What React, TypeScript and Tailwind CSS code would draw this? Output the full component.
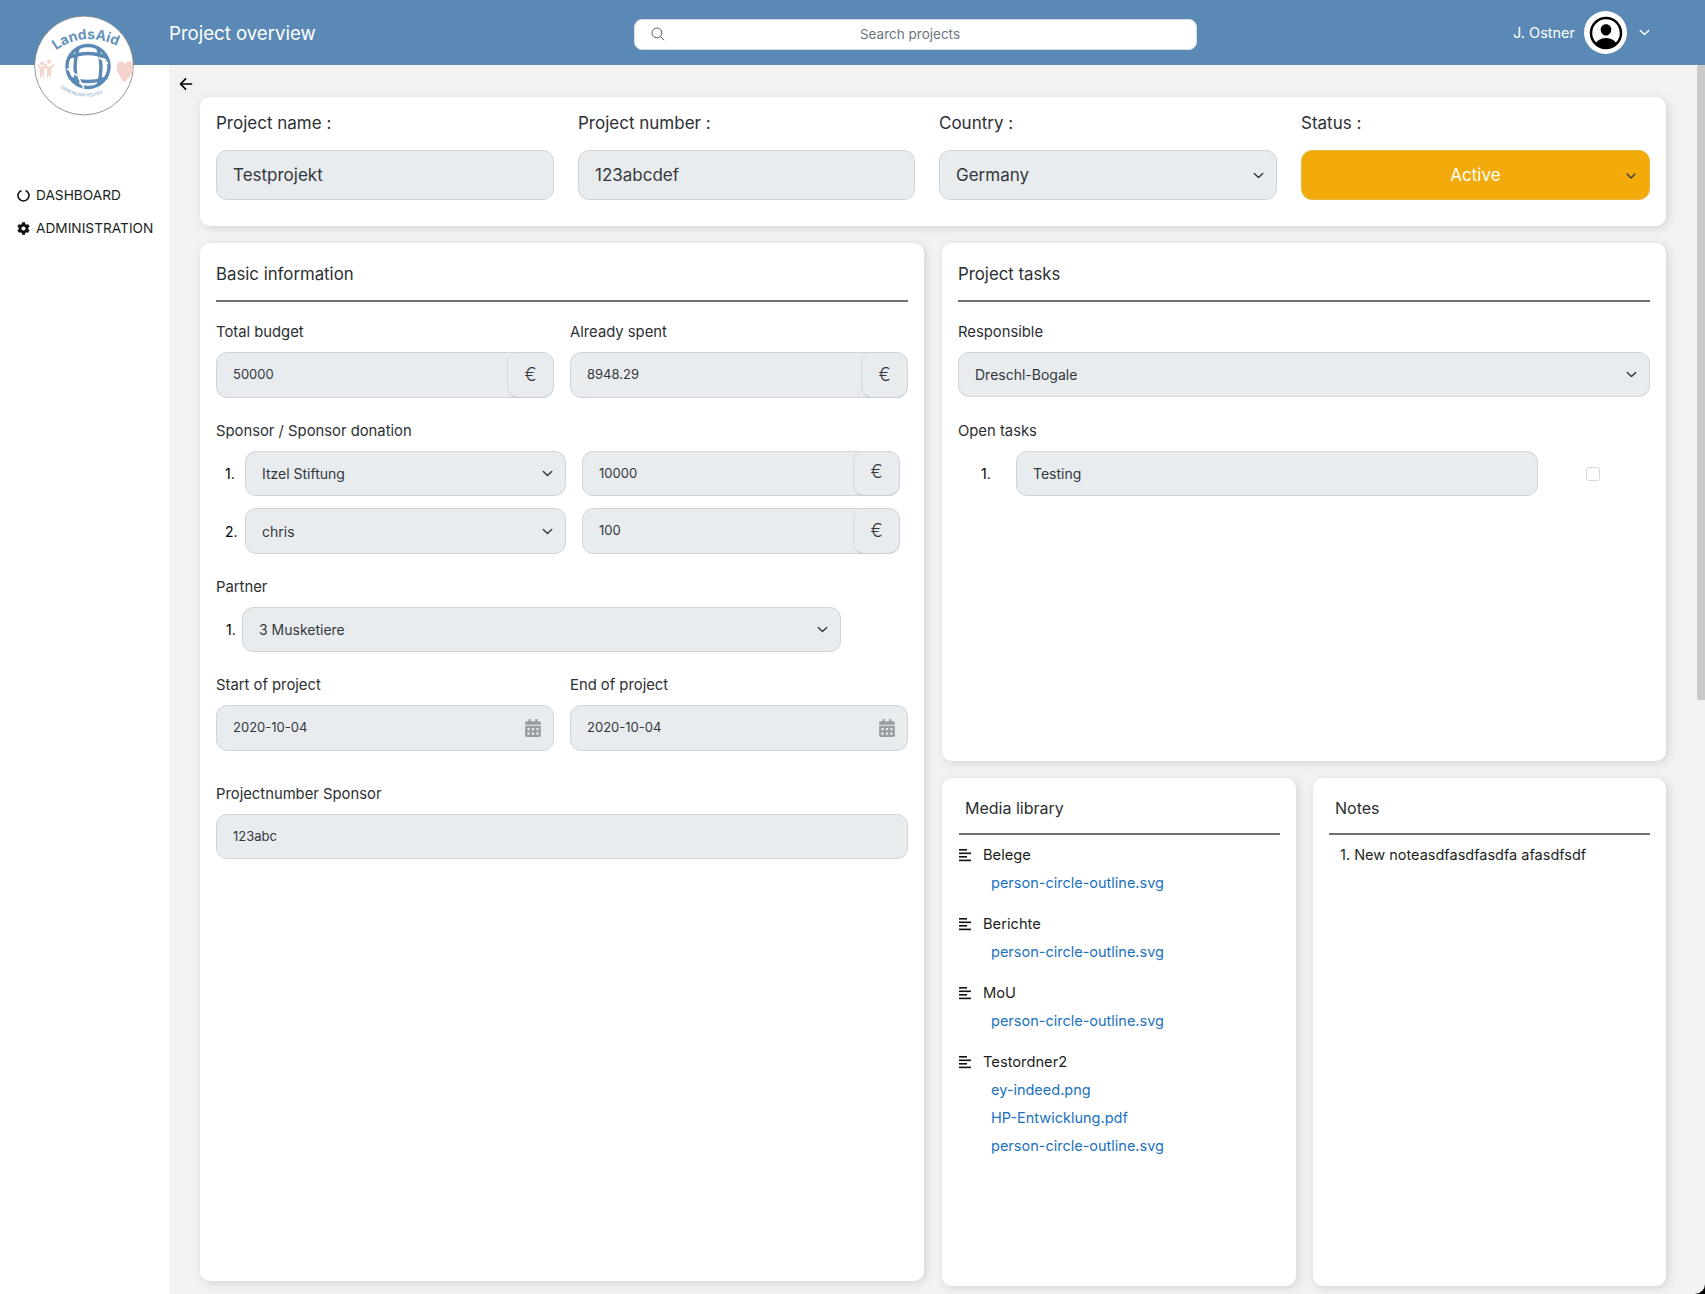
import React from "react";
import { IoArrowBack, IoChevronDown, IoPersonCircleOutline, IoSearchOutline } from "react-icons/io5";
import { FaCalendarAlt, FaCog } from "react-icons/fa";

const boxCls = "bg-[#e9ecef] border border-[#ced4da] rounded-[11px] text-[#33383d] flex items-center";

function Label({ children, className = "" }: { children: React.ReactNode; className?: string }) {
  return <div className={`h-5 flex items-center text-[14.8px] text-[#2b2f33] ${className}`}>{children}</div>;
}

function Box({ value, h = "h-[45px]", className = "", chevron, wide, children }: { value: string; h?: string; className?: string; chevron?: boolean; wide?: boolean; children?: React.ReactNode }) {
  return (
    <div className={`${boxCls} ${h} ${className} pl-4 ${wide ? "text-[14px]" : "text-[13px]"} relative`}>
      <span className="flex-1">{value}</span>
      {chevron && <IoChevronDown className="mr-[10px] text-[15px] text-[#343a40]" />}
      {children}
    </div>
  );
}

function Euro({ value, h, className = "", top = false }: { value: string; h: string; className?: string; top?: boolean }) {
  return (
    <Box value={value} h={h} className={className}>
      <div className={`w-[46px] self-stretch border border-[#d5d9dd] border-r-0 border-t-0 border-b-[#c8ced4] rounded-[11px] -my-px flex items-center justify-center text-[18px] font-light ${top ? "pb-[3px]" : "pb-0"}`}>€</div>
    </Box>
  );
}

function DateBox({ value }: { value: string }) {
  return (
    <Box value={value} h="h-[46px]">
      <FaCalendarAlt className="mr-[11px] text-[18px] text-[#999da1]" />
    </Box>
  );
}

function Card({ title, className = "", children, small = false }: { title: string; className?: string; children: React.ReactNode; small?: boolean }) {
  return (
    <section className={`bg-white rounded-[10px] shadow-[2px_2px_10px_rgba(0,0,0,0.13)] ${className}`}>
      {small ? (
        <div className="h-[57px] border-b-2 border-[#707070] pt-[5px] pl-[6px] flex items-center text-[16px] text-[#2b2f33]">{title}</div>
      ) : (
        <div className="h-[59px] border-b-2 border-[#707070] pt-[6px] flex items-center text-[16.8px] text-[#2b2f33]">{title}</div>
      )}
      {children}
    </section>
  );
}

function TopField({ label, value, chevron }: { label: string; value: string; chevron?: boolean }) {
  return (
    <div>
      <div className="h-[22px] flex items-center pt-[2px] text-[17px] text-[#2b2f33] mt-[15px]">{label}</div>
      <div className={`${boxCls} h-[50px] mt-[16px] pl-4 pt-[2px] text-[17px]`}>
        <span className="flex-1">{value}</span>
        {chevron && <IoChevronDown className="mr-[10px] -mt-[2px] text-[15px] text-[#343a40]" />}
      </div>
    </div>
  );
}

function MediaIcon() {
  return (
    <svg width="13" height="13" viewBox="0 0 13 13" className="shrink-0">
      <g fill="#111">
        <rect x="0" y="0" width="8" height="1.6" />
        <rect x="0" y="3.5" width="12" height="1.6" />
        <rect x="0" y="7" width="8" height="1.6" />
        <rect x="0" y="10.6" width="12" height="1.6" />
      </g>
    </svg>
  );
}

function Folder({ name, files, first }: { name: string; files: string[]; first?: boolean }) {
  return (
    <div className={first ? "mt-[6px]" : "mt-[13px]"}>
      <div className="h-7 flex items-center gap-[11px] text-[14.7px] text-[#1c1f22]">
        <MediaIcon />
        <span>{name}</span>
      </div>
      {files.map((f) => (
        <a key={f} className="h-7 flex items-center ml-[32px] text-[14.5px] text-[#1a72bd]">{f}</a>
      ))}
    </div>
  );
}

function Logo() {
  return (
    <svg viewBox="0 0 100 100" className="absolute left-[34px] top-[15px] w-[100px] h-[101px]">
      <defs>
        <path id="arcTop" d="M 22 35 Q 52 13 90 34" />
        <path id="arcBottom" d="M 26 72 Q 52 90 80 72" />
        <clipPath id="logoClip"><circle cx="50" cy="50" r="49" /></clipPath>
      </defs>
      <circle cx="50" cy="50" r="49.4" fill="#fff" stroke="#7a7a7a" strokeWidth="0.8" />
      <text fontFamily="Inter, sans-serif" fontSize="14" fontWeight="700" fill="#6592bb">
        <textPath href="#arcTop">LandsAid</textPath>
      </text>
      <text fontFamily="Inter, sans-serif" fontSize="4.4" fill="#7fa5c8">
        <textPath href="#arcBottom">GEMEINSAM HELFEN</textPath>
      </text>
      <g transform="translate(54 51)" fill="none" stroke="#5a8ab5" strokeWidth="3.4">
        <circle r="21" />
        <path d="M -19 -9 Q 0 -17 19 -9" />
        <path d="M -19 11 Q 0 19 19 11" />
        <path d="M -10 -18 Q -16 1 -10 19" />
        <path d="M 10 -18 Q 16 1 10 19" />
      </g>
      <g transform="translate(54 51)" stroke="#fff" strokeWidth="1.6">
        <path d="M -21 2 L -11 9" />
        <path d="M 20 -3 L 11 -9" />
        <path d="M -4 22 L -9 12" />
      </g>
      <g fill="#f4d4cc" clipPath="url(#logoClip)">
        <g transform="translate(0 12)">
          <circle cx="8" cy="36" r="2" />
          <circle cx="15" cy="34" r="2" />
          <path d="M 3 38 L 6 42 L 6 52 L 8 47 L 10 52 L 10 42 L 13 37 L 12 36 L 9 39 L 6 39 L 4 36 Z" />
          <path d="M 10 38 L 13 42 L 13 52 L 15 47 L 17 52 L 17 42 L 21 37 L 20 36 L 17 39 L 13 39 L 11 36 Z" />
        </g>
        <path transform="translate(3 9)" d="M 87 58 C 81 50 79 45 80 41 C 81 36 86 35 88 40 C 90 35 96 36 97 41 C 98 45 94 52 87 58 Z" />
      </g>
    </svg>
  );
}

export default function App() {
  return (
    <div className="w-full h-[1294px] bg-black overflow-hidden relative" style={{ fontFamily: "Inter, 'Open Sans', sans-serif" }}>
      <div className="h-full bg-[#f2f2f2] rounded-br-[10px] flex flex-col overflow-hidden">
        <header className="h-[65px] shrink-0 bg-[#5a89b5] flex items-center text-white">
          <div className="w-[169px] shrink-0" />
          <div className="w-[465px] text-[18.6px] pt-[2px]">Project overview</div>
          <div className="w-[563px] h-[31px] mt-[3px] bg-white rounded-lg border border-[#d8dde2] flex items-center relative">
            <IoSearchOutline className="ml-[15px] text-[#5c6267] text-[16px]" />
            <span className="flex-1 text-center text-[13.5px] text-[#6c757d] pr-[42px]">Search projects</span>
          </div>
          <div className="ml-[316px] text-[14.5px]">J. Ostner</div>
          <div className="ml-[9px] w-[43px] h-[43px] rounded-full bg-white flex items-center justify-center">
            <IoPersonCircleOutline className="text-[40px] text-black" />
          </div>
          <IoChevronDown className="ml-[10px] text-[15px] text-white" />
        </header>

        <div className="flex-1 flex min-h-0">
          <aside className="w-[169px] shrink-0 bg-white pl-[17px] pt-[121px] text-[13.7px] text-[#1c1f22]">
            <div className="h-[18px] flex items-center gap-[6px]">
              <svg width="13" height="13" viewBox="0 0 13 13" className="shrink-0">
                <path d="M 8.6 1.4 A 5.5 5.5 0 1 1 4.4 1.4" fill="none" stroke="#111" strokeWidth="1.6" />
              </svg>
              DASHBOARD
            </div>
            <div className="h-[18px] mt-[15px] flex items-center gap-[6px]">
              <FaCog className="text-[13px] text-[#111] shrink-0" />
              ADMINISTRATION
            </div>
          </aside>

          <main className="flex-1 min-w-0 pl-[31px] pr-[39px]">
            <div className="h-8 flex items-center -ml-[23px] pt-[5px]">
              <IoArrowBack className="text-[18px] text-black" />
            </div>

            <section className="h-[129px] bg-white rounded-[10px] shadow-[2px_2px_10px_rgba(0,0,0,0.13)] px-4 grid grid-cols-[338px_337px_338px_349px] gap-x-6 items-start">
              <TopField label="Project name :" value="Testprojekt" />
              <TopField label="Project number :" value="123abcdef" />
              <TopField label="Country :" value="Germany" chevron />
              <div>
                <div className="h-[22px] flex items-center pt-[2px] text-[17px] text-[#2b2f33] mt-[15px]">Status :</div>
                <div className="h-[50px] mt-[16px] bg-[#f3ab0c] rounded-[11px] border border-[#e8b53c] flex items-center pt-[2px] text-white text-[17px] relative">
                  <span className="flex-1 text-center">Active</span>
                  <IoChevronDown className="absolute right-[11px] text-[14px] text-[#343a40]" />
                </div>
              </div>
            </section>

            <div className="mt-[17px] flex gap-[18px] items-start">
              <Card title="Basic information" className="w-[724px] h-[1038px] px-4">
                <div className="mt-[20px] grid grid-cols-[338px_338px] gap-x-4">
                  <div>
                    <Label>Total budget</Label>
                    <Euro value="50000" h="h-[46px]" className="mt-[10px]" />
                  </div>
                  <div>
                    <Label>Already spent</Label>
                    <Euro value="8948.29" h="h-[46px]" className="mt-[10px]" />
                  </div>
                </div>

                <Label className="mt-[23px]">Sponsor / Sponsor donation</Label>
                <div className="mt-[10px] flex items-center">
                  <span className="w-[29px] pl-[9px] text-[14px]">1.</span>
                  <Box value="Itzel Stiftung" wide className="w-[321px]" chevron />
                  <Euro value="10000" h="h-[45px]" className="ml-4 w-[318px]" top />
                </div>
                <div className="mt-[12px] flex items-center">
                  <span className="w-[29px] pl-[9px] text-[14px]">2.</span>
                  <Box value="chris" wide h="h-[46px]" className="w-[321px]" chevron />
                  <Euro value="100" h="h-[46px]" className="ml-4 w-[318px]" />
                </div>

                <Label className="mt-[23px]">Partner</Label>
                <div className="mt-[10px] flex items-center">
                  <span className="w-[26px] pl-[10px] text-[14px]">1.</span>
                  <Box value="3 Musketiere" wide className="w-[599px]" chevron />
                </div>

                <div className="mt-[23px] grid grid-cols-[338px_338px] gap-x-4">
                  <div>
                    <Label>Start of project</Label>
                    <div className="mt-[10px]"><DateBox value="2020-10-04" /></div>
                  </div>
                  <div>
                    <Label>End of project</Label>
                    <div className="mt-[10px]"><DateBox value="2020-10-04" /></div>
                  </div>
                </div>

                <Label className="mt-[33px]">Projectnumber Sponsor</Label>
                <Box value="123abc" className="mt-[10px]" />
              </Card>

              <div className="w-[724px]">
                <Card title="Project tasks" className="h-[518px] px-4">
                  <Label className="mt-[20px]">Responsible</Label>
                  <Box value="Dreschl-Bogale" wide className="mt-[10px]" chevron />
                  <Label className="mt-[24px]">Open tasks</Label>
                  <div className="mt-[10px] flex items-center">
                    <span className="w-[58px] pl-[23px] text-[14px]">1.</span>
                    <Box value="Testing" wide className="w-[522px]" />
                    <div className="ml-[48px] w-[14px] h-[14px] rounded-[3px] border border-[#d5d9dd] bg-white" />
                  </div>
                </Card>

                <div className="mt-[17px] flex gap-[17px]">
                  <Card title="Media library" small className="w-[354px] h-[508px] pl-[17px] pr-4">
                    <Folder first name="Belege" files={["person-circle-outline.svg"]} />
                    <Folder name="Berichte" files={["person-circle-outline.svg"]} />
                    <Folder name="MoU" files={["person-circle-outline.svg"]} />
                    <Folder name="Testordner2" files={["ey-indeed.png", "HP-Entwicklung.pdf", "person-circle-outline.svg"]} />
                  </Card>
                  <Card title="Notes" small className="w-[353px] h-[508px] px-4">
                    <div className="mt-[6px] h-7 flex items-center pl-[11px] text-[14.5px] text-[#1c1f22]">1. New noteasdfasdfasdfa afasdfsdf</div>
                  </Card>
                </div>
              </div>
            </div>
          </main>
        </div>
      </div>

      <Logo />
      <div className="absolute right-0 top-[65px] w-[8px] h-[635px] bg-[#c9c9c9] rounded-l-[3px]" />
    </div>
  );
}
